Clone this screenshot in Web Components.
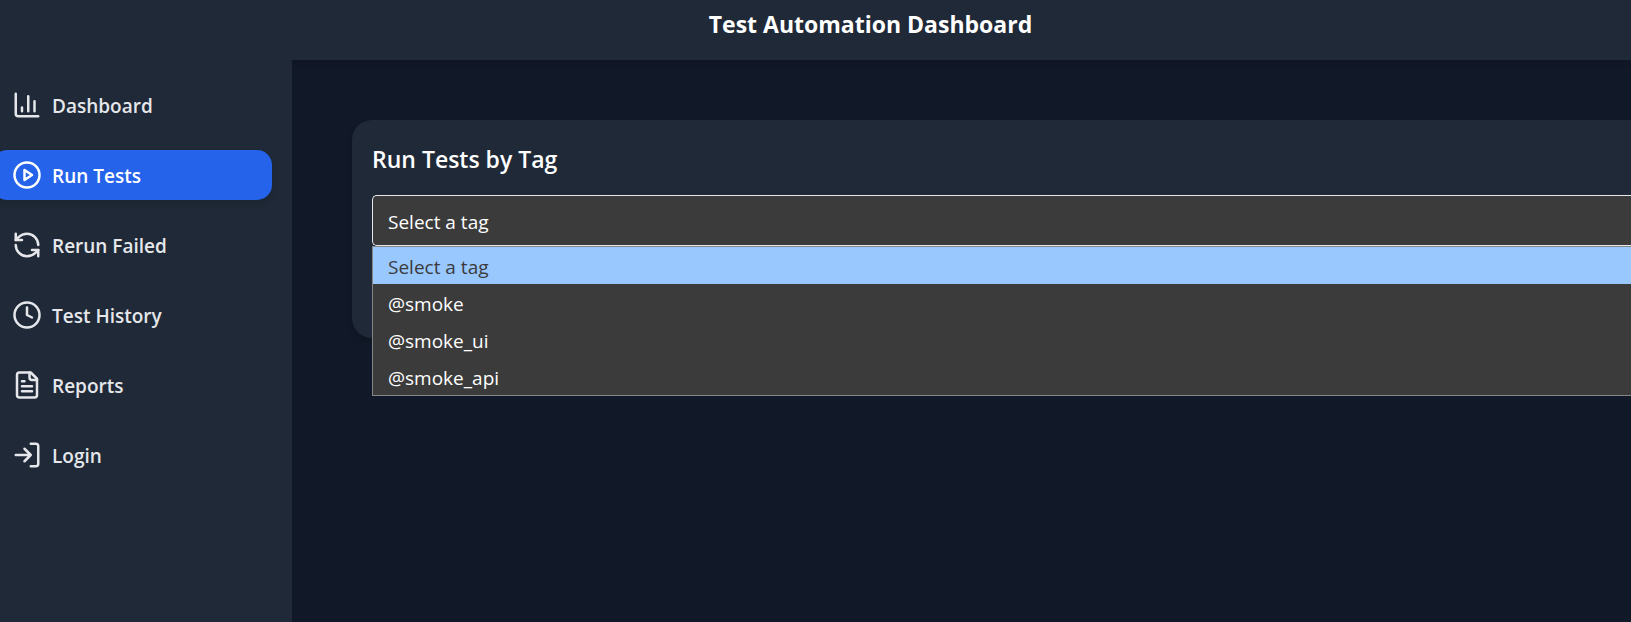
<!DOCTYPE html>
<html lang="en">
<head>
<meta charset="utf-8">
<title>Test Automation Dashboard</title>
<style>
body { margin: 0; background: #111827; font-family: "Open Sans", "Noto Sans", sans-serif; }
</style>
</head>
<body>
<app-shell>
  <span slot="title">Test Automation Dashboard</span>
  <nav-item slot="nav" href="#dashboard" icon="chart">Dashboard</nav-item>
  <nav-item slot="nav" href="#run" icon="play" active>Run Tests</nav-item>
  <nav-item slot="nav" href="#rerun" icon="refresh">Rerun Failed</nav-item>
  <nav-item slot="nav" href="#history" icon="clock">Test History</nav-item>
  <nav-item slot="nav" href="#reports" icon="file">Reports</nav-item>
  <nav-item slot="nav" href="#login" icon="login">Login</nav-item>
  <run-card>
    <span slot="heading">Run Tests by Tag</span>
    <tag-select options="Select a tag,@smoke,@smoke_ui,@smoke_api"></tag-select>
  </run-card>
</app-shell>
<script>
class AppShell extends HTMLElement {
  constructor() {
    super();
    this.attachShadow({ mode: 'open' }).innerHTML = `
      <style>
        :host { display: flex; flex-direction: column; min-height: 100vh; overflow: hidden; color: #fff; }
        header { position: relative; height: 60px; box-sizing: border-box; padding: 0 0 12px 110px; display: flex; align-items: center; justify-content: center; background: #1f2937; box-shadow: 0 4px 6px rgba(0,0,0,.1); }
        h1 { margin: 0; font-size: 23px; line-height: 32px; font-weight: 700; }
        .body { display: flex; flex: 1; }
        nav { width: 292px; flex: none; box-sizing: border-box; padding: 20px 20px 20px 0; display: flex; flex-direction: column; gap: 20px; background: #1f2937; position: relative; }
        main { flex: 1; min-width: 0; padding: 60px 0 60px 60px; }
      </style>
      <header><h1><slot name="title"></slot></h1></header>
      <div class="body"><nav><slot name="nav"></slot></nav><main><slot></slot></main></div>`;
  }
}
const ICONS = {
  chart: '<path d="M3 3v16a2 2 0 0 0 2 2h16M18 17V9M13 17V5M8 17v-3"/>',
  play: '<circle cx="12" cy="12" r="10"/><path d="m10 8 6 4-6 4Z"/>',
  refresh: '<path d="M21 12a9 9 0 0 0-9-9 9.75 9.75 0 0 0-6.74 2.74L3 8"/><path d="M3 3v5h5M3 12a9 9 0 0 0 9 9 9.75 9.75 0 0 0 6.74-2.74L21 16"/><path d="M16 16h5v5"/>',
  clock: '<circle cx="12" cy="12" r="10"/><path d="M12 6v6l4 2"/>',
  file: '<path d="M15 2H6a2 2 0 0 0-2 2v16a2 2 0 0 0 2 2h12a2 2 0 0 0 2-2V7Z"/><path d="M14 2v4a2 2 0 0 0 2 2h4M10 9H8M16 13H8M16 17H8"/>',
  login: '<path d="M15 3h4a2 2 0 0 1 2 2v14a2 2 0 0 1-2 2h-4M10 17l5-5-5-5M15 12H3"/>'
};
class NavItem extends HTMLElement {
  constructor() {
    super();
    this.attachShadow({ mode: 'open' }).innerHTML = `
      <style>
        /* Each item starts a little outside the sidebar's left edge. */
        :host { display: block; margin-left: -8px; color: #e5e7eb; }
        :host([active]) { color: #fff; }
        a { display: flex; align-items: center; gap: 10px; height: 50px; box-sizing: border-box; padding: 0 20px; border-radius: 15px; color: inherit; text-decoration: none; font-size: 19px; line-height: 30px; font-weight: 600; }
        :host([active]) a { background: #2563eb; box-shadow: 0 4px 6px rgba(0,0,0,.1); }
        svg { width: 30px; height: 30px; flex: none; }
        span { padding-top: 2px; }
      </style>
      <a><svg viewBox="0 0 24 24" fill="none" stroke="currentColor" stroke-width="2" stroke-linecap="round" stroke-linejoin="round" aria-hidden="true"></svg><span><slot></slot></span></a>`;
  }
  connectedCallback() {
    this.shadowRoot.querySelector('a').href = this.getAttribute('href');
    this.shadowRoot.querySelector('svg').innerHTML = ICONS[this.getAttribute('icon')];
  }
}
class RunCard extends HTMLElement {
  constructor() {
    super();
    this.attachShadow({ mode: 'open' }).innerHTML = `
      <style>
        :host { display: block; padding: 20px 0 92px 20px; border-radius: 20px 0 0 20px; background: #1f2937; box-shadow: 0 4px 6px rgba(0,0,0,.1); }
        h2 { margin: 0 0 17px; font-size: 23px; line-height: 38px; font-weight: 600; }
      </style>
      <h2><slot name="heading"></slot></h2><slot></slot>`;
  }
}
class TagSelect extends HTMLElement {
  constructor() {
    super();
    this.attachShadow({ mode: 'open' }).innerHTML = `
      <style>
        :host { display: block; position: relative; font-size: 19px; }
        select { display: block; appearance: none; width: 100%; height: 51px; margin: 0; padding: 2px 15px 0; border: 1px solid #e5e7eb; border-right: 0; border-radius: 5px 0 0 5px; background: #3b3b3b; color: #fff; font: inherit; line-height: 30px; outline: 0; }
        ul { position: absolute; top: 100%; left: 0; right: 0; margin: 0; padding: 0; list-style: none; border: 1px solid #858585; border-right: 0; background: #3b3b3b; }
        li { padding: 3px 15px 0; line-height: 34px; }
        li[aria-selected="true"] { background: #99c8ff; color: #3b3b3b; }
      </style>
      <select aria-label="Tag"></select><ul role="listbox" aria-label="Tags"></ul>`;
  }
  connectedCallback() {
    const select = this.shadowRoot.querySelector('select');
    const list = this.shadowRoot.querySelector('ul');
    this.getAttribute('options').split(',').forEach((name, i) => {
      select.add(new Option(name));
      const item = document.createElement('li');
      item.setAttribute('role', 'option');
      item.setAttribute('aria-selected', String(i === 0));
      item.textContent = name;
      item.addEventListener('click', () => { select.selectedIndex = i; });
      list.append(item);
    });
  }
}
customElements.define('app-shell', AppShell);
customElements.define('nav-item', NavItem);
customElements.define('run-card', RunCard);
customElements.define('tag-select', TagSelect);
</script>
</body>
</html>
